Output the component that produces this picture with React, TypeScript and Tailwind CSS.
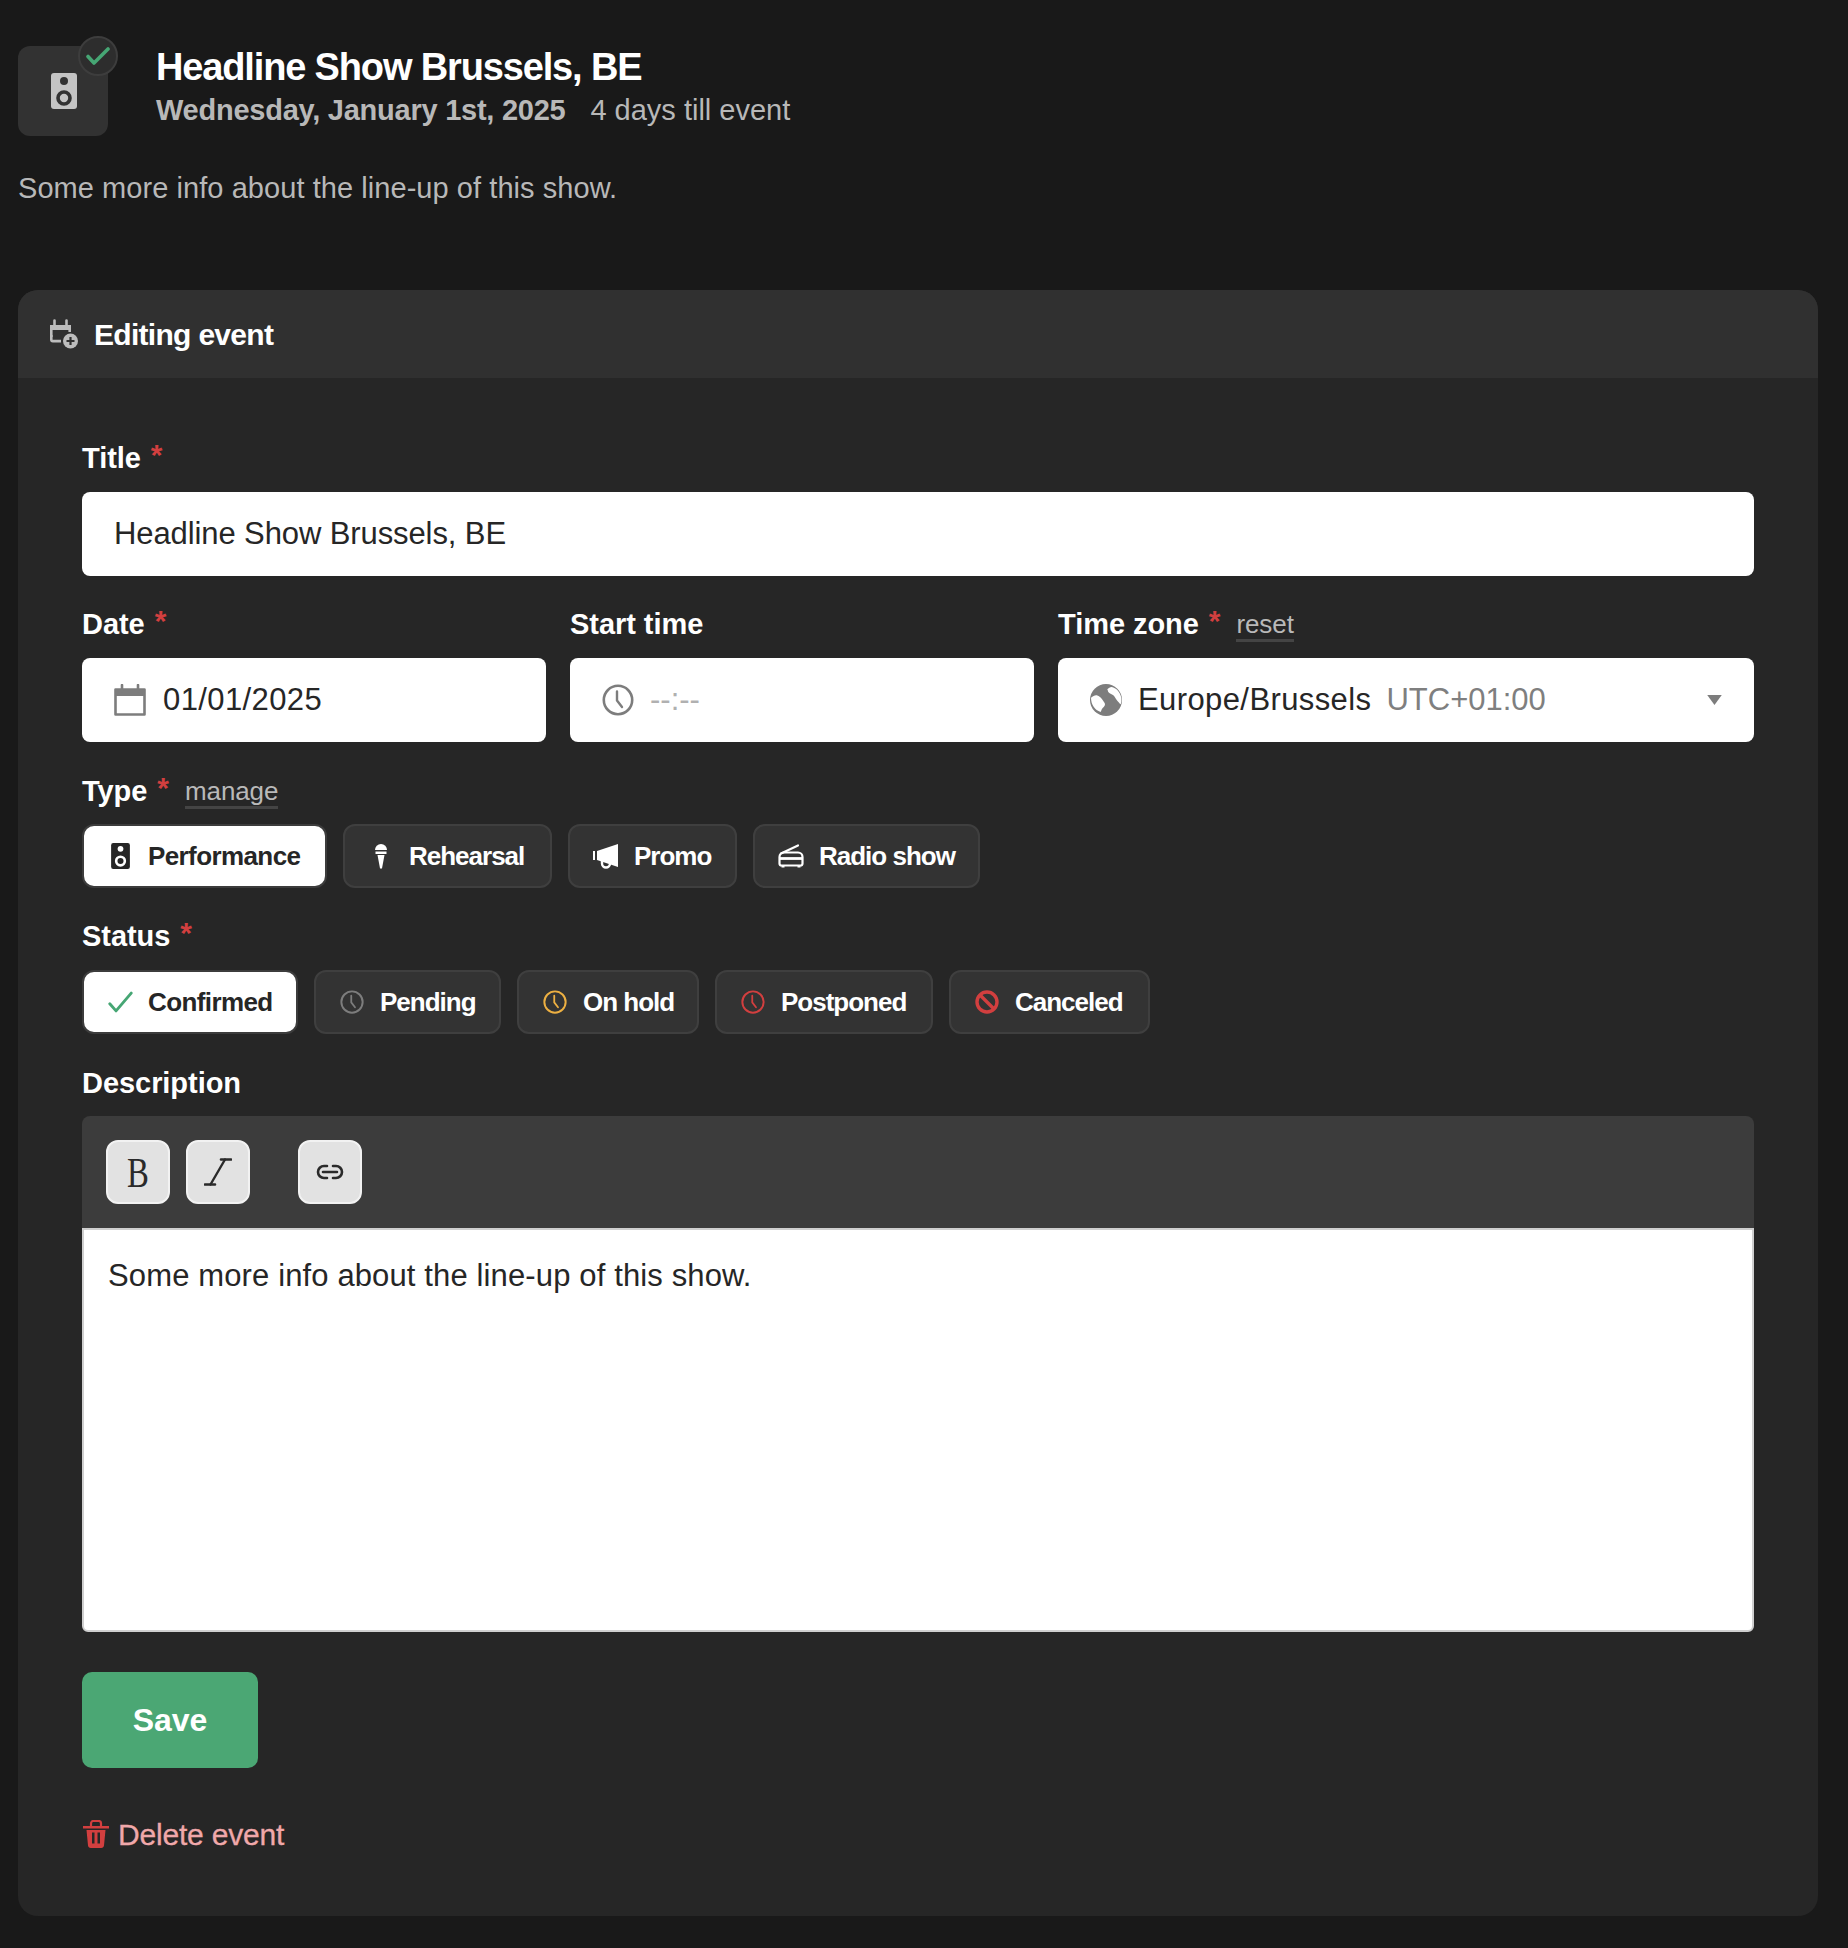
import React from "react";

function Speaker({ className = "", hole = "#333" }: { className?: string; hole?: string }) {
  return (
    <svg viewBox="0 0 26 36" className={className}>
      <rect x="0" y="0" width="26" height="36" rx="3" fill="currentColor" />
      <circle cx="13" cy="8" r="4" fill={hole} />
      <circle cx="13" cy="25" r="6" fill="none" stroke={hole} strokeWidth="3.6" />
    </svg>
  );
}

function Clock({ className = "" }: { className?: string }) {
  return (
    <svg viewBox="0 0 32 32" className={className} fill="none" stroke="currentColor" strokeWidth="2.6" strokeLinecap="round" strokeLinejoin="round">
      <circle cx="16" cy="16" r="14.2" />
      <path d="M15 7.5v9l5 6.5" strokeWidth="2.4" />
    </svg>
  );
}

function Star() {
  return <span className="text-[#d23f3f] font-bold ml-[10px] text-[30px] leading-[26px] relative top-[-3px]">*</span>;
}

function Label({ children, star, link }: { children: React.ReactNode; star?: boolean; link?: string }) {
  return (
    <div className="h-[34px] pt-[2px] flex items-center text-[29px] leading-[34px] font-bold text-white tracking-[-0.05px]">
      <span>{children}</span>
      {star && <Star />}
      {link && (
        <span className="ml-[16px] mt-[3px] text-[26px] font-normal leading-[30px] text-[#b9b9b9] border-b-[3px] border-[#444444] tracking-[-0.1px]">
          {link}
        </span>
      )}
    </div>
  );
}

function Choice({ icon, text, active, w }: { icon: React.ReactNode; text: string; active?: boolean; w: string }) {
  return (
    <div
      className={
        "h-[64px] rounded-[12px] flex items-center border-2 text-[26px] font-bold pl-[22px] " +
        w + " " +
        (active ? "bg-white border-[#3c3c3c] text-[#262626] tracking-[-0.6px]" : "bg-[#333333] border-[#3f3f3f] text-white tracking-[-1px]")
      }
    >
      <span className="w-[28px] h-[30px] flex items-center justify-center shrink-0 mr-[14px]">{icon}</span>
      <span className="whitespace-nowrap">{text}</span>
    </div>
  );
}

function ToolButton({ children }: { children: React.ReactNode }) {
  return (
    <div className="w-[64px] h-[64px] rounded-[12px] bg-[#e2e2e2] border-2 border-[#f2f2f2] flex items-center justify-center text-[#2a2a2a]">
      {children}
    </div>
  );
}

export default function App() {
  return (
    <div className="min-h-[1948px] bg-[#191919] pl-[18px] pr-[30px] pt-[46px] pb-[32px] font-['Liberation_Sans',Arial,sans-serif]">
      <div className="flex">
        <div className="relative w-[90px] h-[90px] rounded-[12px] bg-[#323232] flex items-center justify-center shrink-0 text-[#c4c4c4]">
          <Speaker className="w-[26px] h-[36px] ml-[2px]" hole="#323232" />
          <div className="absolute left-[60px] top-[-10px] w-[40px] h-[40px] rounded-full bg-[#2d2d2d] border-2 border-[#3d3d3d] flex items-center justify-center">
            <svg viewBox="0 0 24 18" className="w-[24px] h-[18px]" fill="none" stroke="#46a674" strokeWidth="3.6" strokeLinecap="round" strokeLinejoin="round">
              <path d="M2 9.500L8 16 22 2" />
            </svg>
          </div>
        </div>
        <div className="ml-[48px] pt-[1px]">
          <div className="h-[40px] text-[38px] leading-[40px] font-bold text-white tracking-[-1.15px] whitespace-nowrap">
            Headline Show Brussels, BE
          </div>
          <div className="mt-[4px] h-[40px] flex items-center text-[29px] text-[#b8b8b8] whitespace-nowrap">
            <span className="font-bold tracking-[-0.25px]">Wednesday, January 1st, 2025</span>
            <span className="ml-[25px]">4 days till event</span>
          </div>
        </div>
      </div>

      <p className="mt-[34px] h-[36px] text-[29px] leading-[36px] tracking-[0.06px] text-[#b8b8b8]">Some more info about the line-up of this show.</p>

      <div className="mt-[84px] rounded-[20px] bg-[#262626] overflow-hidden">
        <div className="h-[88px] bg-[#303030] flex items-center pl-[31px]">
          <svg viewBox="0 0 30 30" className="w-[30px] h-[30px] text-[#bdbdbd]">
            <path d="M2.300 18V7.500h18.400V13" fill="none" stroke="currentColor" strokeWidth="2.600" />
            <path d="M1 6h21v5H1z" fill="currentColor" />
            <path d="M5.500 1.500v5M17.500 1.500v5" stroke="currentColor" strokeWidth="2.600" strokeLinecap="round" />
            <path d="M2.300 16v4.500c0 1 .6 1.600 1.500 1.600H12" fill="none" stroke="currentColor" strokeWidth="2.600" />
            <circle cx="21.500" cy="22" r="7.500" fill="currentColor" />
            <path d="M21.500 18v8M17.500 22h8" stroke="#303030" strokeWidth="2.200" />
          </svg>
          <span className="ml-[15px] text-[30px] font-bold text-white tracking-[-0.7px]">Editing event</span>
        </div>

        <div className="px-[64px] pt-[62px] pb-[64px]">
          <Label star>Title</Label>
          <div className="mt-[18px] h-[84px] rounded-[8px] bg-white flex items-center pl-[32px] text-[31px] tracking-[-0.1px] text-[#262626]">
            Headline Show Brussels, BE
          </div>

          <div className="mt-[30px] grid grid-cols-[2fr_2fr_3fr] gap-x-[24px]">
            <div>
              <Label star>Date</Label>
              <div className="mt-[18px] h-[84px] rounded-[8px] bg-white flex items-center pl-[32px] text-[31px] tracking-[0.4px] text-[#262626]">
                <svg viewBox="0 0 32 32" className="w-[32px] h-[32px] text-[#7d7d7d] shrink-0 mr-[17px]">
                  <path d="M1.500 5.500h29v25h-29z" fill="none" stroke="currentColor" strokeWidth="2.600" strokeLinejoin="round" />
                  <path d="M1.500 5.500h29v6.500h-29z" fill="currentColor" />
                  <path d="M8 1v6M24 1v6" stroke="currentColor" strokeWidth="2.600" strokeLinecap="round" />
                </svg>
                01/01/2025
              </div>
            </div>
            <div>
              <Label>Start time</Label>
              <div className="mt-[18px] h-[84px] rounded-[8px] bg-white flex items-center pl-[32px] text-[31px] text-[#b0b0b0]">
                <Clock className="w-[32px] h-[32px] text-[#7d7d7d] shrink-0 mr-[16px]" />
                <span>--:--</span>
              </div>
            </div>
            <div>
              <Label star link="reset">Time zone</Label>
              <div className="mt-[18px] h-[84px] rounded-[8px] bg-white flex items-center pl-[32px] pr-[32px] text-[31px] text-[#262626]">
                <svg viewBox="0 0 32 32" className="w-[32px] h-[32px] text-[#7d7d7d] shrink-0 mr-[16px]">
                  <circle cx="16" cy="16" r="16" fill="currentColor" />
                  <path d="M1 13.700C3 12 5 11 6.700 11.300c2.500.5 5 3 6.600 5.700.9 1.300 1.700 2.300 1.700 3.300 0 2.500-2.300 3-3.200 5-.4 1-.8 2-1.200 2.700-1.500-.5-2.800-1.200-4-2C4.500 24 2.500 21.500 1.700 18.700 1.300 17 1 15.300 1 13.700z" fill="#fff" />
                  <path d="M17.300 5.300C18.500 4 20 3 21.700 3c2.200.8 4.200 1.700 5.600 3 2 2 3.300 4.800 4 7.700.3 2.300.2 4.600-.6 6.600-1.500-1-2.600-2.800-4-4.300-1.200-1.600-2-3.400-3.400-4.700-1.500-1.400-4-1.500-5-3.300-.2-.5-.5-1.800-1-2.700z" fill="#fff" />
                </svg>
                <span className="tracking-[0.4px]">Europe/Brussels</span>
                <span className="ml-[15px] text-[#7f7f7f]">UTC+01:00</span>
                <svg viewBox="0 0 16 11" className="ml-auto w-[15px] h-[10px] text-[#7d7d7d]">
                  <path d="M0 0h16L8 11z" fill="currentColor" />
                </svg>
              </div>
            </div>
          </div>

          <div className="mt-[31px]">
            <Label star link="manage">Type</Label>
          </div>
          <div className="mt-[17px] flex gap-x-[16px]">
            <Choice w="w-[245px]" active text="Performance" icon={<Speaker className="w-[19px] h-[26px]" hole="#fff" />} />
            <Choice w="w-[209px]" text="Rehearsal" icon={
              <svg viewBox="0 0 16 26" className="w-[16px] h-[26px]">
                <path d="M2 7a6 6 0 0 1 12 0z" fill="currentColor" />
                <path d="M2.500 8.500h11V11H2.500z" fill="currentColor" />
                <path d="M4.500 12h7L9 25.500H7z" fill="currentColor" />
              </svg>
            } />
            <Choice w="w-[169px]" text="Promo" icon={
              <svg viewBox="0 0 28 26" className="w-[28px] h-[26px]">
                <path d="M1 8h2v9H1z" fill="currentColor" />
                <path d="M5 8l21-7v23l-21-7z" fill="currentColor" />
                <path d="M10 18v2.500a4 4 0 0 0 8 0V21" fill="none" stroke="currentColor" strokeWidth="2.400" />
              </svg>
            } />
            <Choice w="w-[227px]" text="Radio show" icon={
              <svg viewBox="0 0 26 24" className="w-[26px] h-[24px]" fill="none" stroke="currentColor" strokeWidth="2.200">
                <path d="M3 9.500L20 1.500" strokeLinecap="round" />
                <path d="M1.500 13c0-2.500 2-4.500 4.500-4.500h14c2.500 0 4.500 2 4.500 4.500v6.500c0 1.200-.8 2-2 2h-19c-1.200 0-2-.8-2-2z" />
                <path d="M1.500 14.500h23" strokeWidth="2.800" />
                <path d="M5 21v2.500M21 21v2.500" strokeWidth="3" />
              </svg>
            } />
          </div>

          <div className="mt-[30px]">
            <Label star>Status</Label>
          </div>
          <div className="mt-[18px] flex gap-x-[16px]">
            <Choice w="w-[216px]" active text="Confirmed" icon={
              <svg viewBox="0 0 28 24" className="w-[25px] h-[22px]" fill="none" stroke="#46a674" strokeWidth="3.200" strokeLinecap="round" strokeLinejoin="round">
                <path d="M2 14l7 8L26 2" />
              </svg>
            } />
            <Choice w="w-[187px]" text="Pending" icon={<span className="text-[#7d7d7d]"><Clock className="w-[24px] h-[24px]" /></span>} />
            <Choice w="w-[182px]" text="On hold" icon={<span className="text-[#edb042]"><Clock className="w-[24px] h-[24px]" /></span>} />
            <Choice w="w-[218px]" text="Postponed" icon={<span className="text-[#d23f3f]"><Clock className="w-[24px] h-[24px]" /></span>} />
            <Choice w="w-[201px]" text="Canceled" icon={
              <svg viewBox="0 0 24 24" className="w-[24px] h-[24px]" fill="none" stroke="#d23f3f" strokeWidth="3.400">
                <circle cx="12" cy="12" r="10" />
                <path d="M5 5l14 14" />
              </svg>
            } />
          </div>

          <div className="mt-[31px]">
            <Label>Description</Label>
          </div>
          <div className="mt-[17px]">
            <div className="h-[112px] bg-[#3c3c3c] rounded-t-[8px] flex items-center pl-[24px]">
              <ToolButton><span className="font-['Liberation_Serif',serif] text-[42px] leading-none scale-x-[0.78] mt-[1px]">B</span></ToolButton>
              <div className="ml-[16px]">
                <ToolButton>
                  <svg viewBox="0 0 28 28" className="w-[28px] h-[28px]" fill="none" stroke="currentColor" strokeLinecap="round">
                    <path d="M21 1.500L6.500 26.500" strokeWidth="2.400" />
                    <path d="M17 1.500H27M1 26.500h10" strokeWidth="2.600" />
                  </svg>
                </ToolButton>
              </div>
              <div className="ml-[48px]">
                <ToolButton>
                  <svg viewBox="0 0 28 16" className="w-[28px] h-[16px]" fill="none" stroke="currentColor" strokeWidth="2.600" strokeLinecap="round">
                    <path d="M11 2H8a6 6 0 0 0 0 12h3M17 2h3a6 6 0 0 1 0 12h-3M7 8h14" />
                  </svg>
                </ToolButton>
              </div>
            </div>
            <div className="h-[404px] bg-white border-2 border-[#cfcfcf] rounded-b-[6px] pl-[24px] pt-[26px] text-[31px] tracking-[0.13px] leading-[40px] text-[#262626]">
              Some more info about the line-up of this show.
            </div>
          </div>

          <div className="mt-[40px] w-[176px] h-[96px] rounded-[10px] bg-[#4ba774] flex items-center justify-center text-[32px] font-bold text-white">
            Save
          </div>

          <div className="mt-[48px] h-[36px] flex items-center text-[30px] tracking-[-0.2px] text-[#f0a8aa] [-webkit-text-stroke:0.3px_#f0a8aa]">
            <svg viewBox="0 0 26 28" className="w-[26px] h-[28px] ml-[1px] mr-[9px] text-[#d23f3f]">
              <path d="M0 6h26v2.400H0z" fill="currentColor" />
              <path d="M8 6.500V3.500C8 2 9 1 10.500 1h5C17 1 18 2 18 3.500v3" fill="none" stroke="currentColor" strokeWidth="2.200" />
              <path fillRule="evenodd" d="M3.500 10h19l-1.500 15.500c-.2 1.500-1.200 2.500-2.700 2.500H7.700c-1.500 0-2.500-1-2.700-2.500zM9 12.500v11h2.500v-11zM14.500 12.500v11H17v-11z" fill="currentColor" />
            </svg>
            Delete event
          </div>
        </div>
      </div>
    </div>
  );
}
